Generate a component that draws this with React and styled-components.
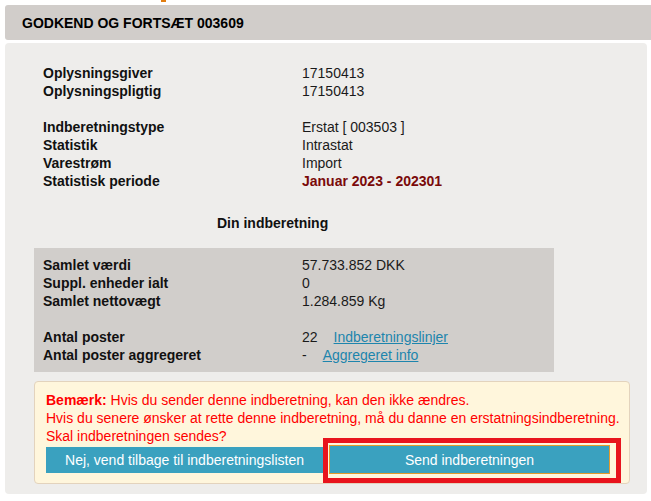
import React from 'react'
import styled, { createGlobalStyle } from 'styled-components'

const GlobalStyle = createGlobalStyle`
  html, body {
    margin: 0;
    padding: 0;
    background: #fff;
  }
  body {
    font-family: "Liberation Sans", Arial, sans-serif;
    font-size: 14px;
    color: #111;
  }
`

const Page = styled.div`
  width: 651px;
  height: 501px;
  overflow: hidden;
`

const TopStrip = styled.div`
  height: 5px;
  padding-left: 161px;
`

const TopMark = styled.span`
  display: block;
  width: 5px;
  height: 2px;
  background: #e27d10;
`

const Header = styled.div`
  margin-left: 5px;
  height: 35px;
  display: flex;
  align-items: center;
  padding-left: 17px;
  background: #d1cdca;
  border-radius: 3px 0 0 3px;
  font-size: 14px;
  font-weight: 700;
  color: #000;
`

const Panel = styled.div`
  margin: 3px 4px 0 5px;
  height: 451px;
  box-sizing: border-box;
  padding: 21px 17px 0 29px;
  background: #eeedeb;
  border-radius: 4px;
`

const InfoTable = styled.div`
  padding-left: 9px;
`

const Row = styled.div`
  display: grid;
  grid-template-columns: 259px 1fr;
  height: 18px;
  line-height: 18px;
  white-space: nowrap;
`

const Spacer = styled.div`
  height: 18px;
`

const Label = styled.span`
  font-weight: 700;
  color: #111;
`

const Value = styled.span`
  color: ${(p) => (p.$accent ? '#7a0a0a' : '#1a1a1a')};
  font-weight: ${(p) => (p.$accent ? 700 : 400)};
`

const Link = styled.a`
  margin-left: 16px;
  color: #1d85ad;
  text-decoration: underline;
  cursor: pointer;
`

const SectionTitle = styled.div`
  margin: 24px 0 16px 183px;
  height: 18px;
  line-height: 18px;
  font-weight: 700;
  color: #111;
`

const SummaryBox = styled.div`
  width: 520px;
  box-sizing: border-box;
  padding: 8px 9px;
  background: #d1cecb;
`

const Note = styled.div`
  margin-top: 9px;
  width: 596px;
  height: 103px;
  box-sizing: border-box;
  padding: 9px 11px 0 11px;
  background: #fff6dc;
  border: 1px solid #e3d3bd;
  border-radius: 4px;
  color: #f00;
`

const NoteLine = styled.div`
  height: 18px;
  line-height: 18px;
  white-space: nowrap;
`

const Buttons = styled.div`
  display: flex;
  align-items: center;
  gap: 6px;
`

const Highlight = styled.div`
  position: relative;
`

const Frame = styled.div`
  position: absolute;
  left: -6px;
  top: -7px;
  right: -11px;
  bottom: -9px;
  border: 5px solid #e8141d;
  pointer-events: none;
`

const Button = styled.button`
  height: ${(p) => (p.$primary ? '29px' : '26px')};
  width: ${(p) => (p.$primary ? '281px' : '277px')};
  padding: 0;
  border: ${(p) => (p.$primary ? '1px solid #e39a2c' : 'none')};
  background: #3aa1bf;
  color: #fff;
  font-family: "Liberation Sans", Arial, sans-serif;
  font-size: 14px;
  cursor: pointer;
`

export default function App() {
  return (
    <Page>
      <GlobalStyle />
      <TopStrip>
        <TopMark />
      </TopStrip>
      <Header>GODKEND OG FORTSÆT 003609</Header>
      <Panel>
        <InfoTable>
          <Row><Label>Oplysningsgiver</Label><Value>17150413</Value></Row>
          <Row><Label>Oplysningspligtig</Label><Value>17150413</Value></Row>
          <Spacer />
          <Row><Label>Indberetningstype</Label><Value>Erstat [ 003503 ]</Value></Row>
          <Row><Label>Statistik</Label><Value>Intrastat</Value></Row>
          <Row><Label>Varestrøm</Label><Value>Import</Value></Row>
          <Row><Label>Statistisk periode</Label><Value $accent>Januar 2023 - 202301</Value></Row>
        </InfoTable>

        <SectionTitle>Din indberetning</SectionTitle>

        <SummaryBox>
          <Row><Label>Samlet værdi</Label><Value>57.733.852 DKK</Value></Row>
          <Row><Label>Suppl. enheder ialt</Label><Value>0</Value></Row>
          <Row><Label>Samlet nettovægt</Label><Value>1.284.859 Kg</Value></Row>
          <Spacer />
          <Row><Label>Antal poster</Label><Value>22<Link>Indberetningslinjer</Link></Value></Row>
          <Row><Label>Antal poster aggregeret</Label><Value>-<Link>Aggregeret info</Link></Value></Row>
        </SummaryBox>

        <Note>
          <NoteLine><b>Bemærk:</b> Hvis du sender denne indberetning, kan den ikke ændres.</NoteLine>
          <NoteLine>Hvis du senere ønsker at rette denne indberetning, må du danne en erstatningsindberetning.</NoteLine>
          <NoteLine>Skal indberetningen sendes?</NoteLine>
          <Buttons>
            <Button>Nej, vend tilbage til indberetningslisten</Button>
            <Highlight>
              <Button $primary>Send indberetningen</Button>
              <Frame />
            </Highlight>
          </Buttons>
        </Note>
      </Panel>
    </Page>
  )
}
